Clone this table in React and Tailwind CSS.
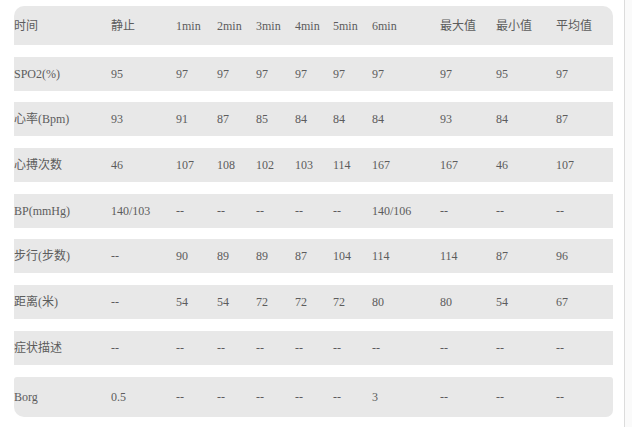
const header = ["时间", "静止", "1min", "2min", "3min", "4min", "5min", "6min", "最大值", "最小值", "平均值"];

const rows = [
  ["SPO2(%)", "95", "97", "97", "97", "97", "97", "97", "97", "95", "97"],
  ["心率(Bpm)", "93", "91", "87", "85", "84", "84", "84", "93", "84", "87"],
  ["心搏次数", "46", "107", "108", "102", "103", "114", "167", "167", "46", "107"],
  ["BP(mmHg)", "140/103", "--", "--", "--", "--", "--", "140/106", "--", "--", "--"],
  ["步行(步数)", "--", "90", "89", "89", "87", "104", "114", "114", "87", "96"],
  ["距离(米)", "--", "54", "54", "72", "72", "72", "80", "80", "54", "67"],
  ["症状描述", "--", "--", "--", "--", "--", "--", "--", "--", "--", "--"],
  ["Borg", "0.5", "--", "--", "--", "--", "--", "3", "--", "--", "--"],
];

const grid =
  "grid grid-cols-[97px_65px_41px_39px_39px_38px_39px_68px_56px_60px_57px] items-center bg-[#e8e8e8]";

function Row({ cells, className }) {
  return (
    <div className={`${grid} ${className}`}>
      {cells.map((c, i) => (
        <div key={i} className="whitespace-nowrap">
          {c}
        </div>
      ))}
    </div>
  );
}

export default function App() {
  return (
    <div
      className="w-[632px] h-[427px] bg-white flex text-[12px] text-[#5c5c5c]"
      style={{ fontFamily: '"Liberation Serif", "Noto Sans CJK SC", serif' }}
    >
      <div className="w-[625px] border-r border-[#dcdcdc] pl-[14px] pt-[6px]">
        <div className="w-[599px] flex flex-col gap-[11.7px]">
          <Row cells={header} className="h-[39px] rounded-t-[10px]" />
          {rows.map((r, i) => (
            <Row
              key={i}
              cells={r}
              className={
                i === rows.length - 1
                  ? "h-[40px] rounded-t-[3px] rounded-bl-[10px] rounded-br-[7px]"
                  : "h-[34px]"
              }
            />
          ))}
        </div>
      </div>
      <div className="flex-1 bg-[#fafafa]" />
    </div>
  );
}
